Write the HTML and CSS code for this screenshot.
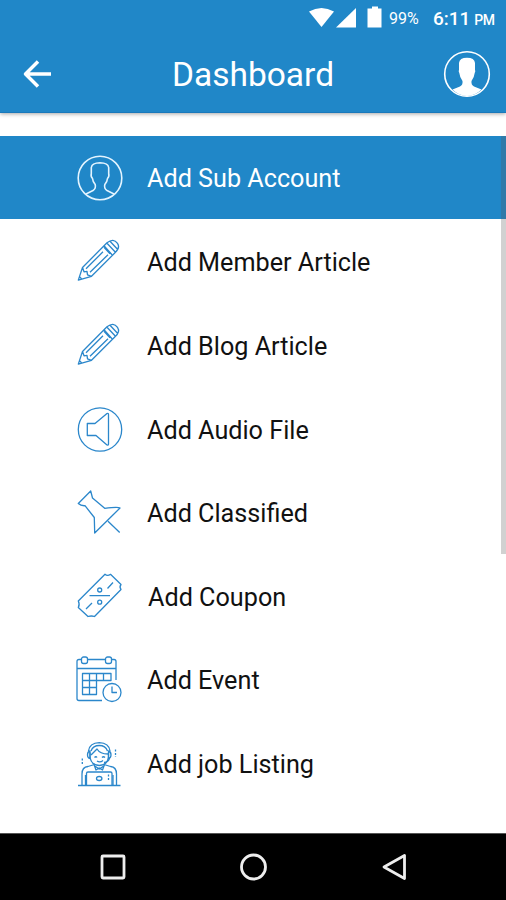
FILE: index.html
```html
<!DOCTYPE html>
<html lang="en">
<head>
    <meta charset="UTF-8">
    <meta name="viewport" content="width=device-width, initial-scale=1.0">
    <title>Dashboard</title>
    <link rel="stylesheet" href="styles.css">
</head>
<body>
    <div class="screen">
        <header class="header">
            <div class="status-bar">
                <svg class="status-icons" viewBox="0 0 74 24">
                    <path d="M0 5.500Q12.500-1.500 25 5.500L12.500 21z"/>
                    <path d="M47 2v19.500H27z"/>
                    <path d="M63 0.500h6v2h3.500v19H58.500V2.500H63z"/>
                </svg>
                <span class="battery">99%</span>
                <span class="time">6:11 <small>PM</small></span>
            </div>
            <div class="title-bar">
                <button class="back-btn" aria-label="Back">
                    <svg width="30" height="30" viewBox="0 0 30 30">
                        <path d="M29 15H4M16 2.500L3.500 15L16 27.500"/>
                    </svg>
                </button>
                <h1>Dashboard</h1>
                <button class="profile-btn" aria-label="Profile">
                    <svg width="48" height="48" viewBox="0 0 48 48">
                        <circle cx="24" cy="24" r="22.300"/>
                        <path d="M9.500 39.500L17 36.500Q20 35 19.500 31Q16.800 27.500 16.300 23Q15.300 21.500 16 19.500V13Q16.500 7.800 24 7.700Q31.500 7.800 32 13V19.500Q32.700 21.500 31.700 23Q31.200 27.500 28.500 31Q28 35 31 36.500L38.500 39.500Q32 46 24 46Q16 46 9.500 39.500z"/>
                    </svg>
                </button>
            </div>
        </header>

        <main class="content">
            <ul class="menu">
                <li class="menu-item active">
                    <svg class="icon" viewBox="0 0 48 48">
                        <circle cx="24" cy="25" r="21.800"/>
                        <path d="M10 41L17 37.500Q20.200 35.500 19.200 31.500Q16.700 28.500 16.500 25.500Q14.500 23.500 15.300 20.500V14.500Q16 10 24 9.800Q32 10 32.700 14.500V20.500Q33.500 23.500 31.500 25.500Q31.300 28.500 28.800 31.500Q27.800 35.500 31 37.500L38 41"/>
                    </svg>
                    <span>Add Sub Account</span>
                </li>
                <li class="menu-item">
                    <svg class="icon" viewBox="0 -0.800 48 48">
                        <path d="M2.300 42.300L6.500 29.700L31 5Q37.500-.2 41.500 5.500Q44.500 10 39 15L15.500 38.500zM6.500 29.700L8 34L11 33.500L11.500 37L15.500 38.500M28 8L36 17M31 5.500L39 14M34 3.500L41.500 11.500M10 31L27 14M14 34.500L32 17M28 9.500L34 16M3.500 39L5.500 41"/>
                    </svg>
                    <span>Add Member Article</span>
                </li>
                <li class="menu-item">
                    <svg class="icon" viewBox="0 -0.800 48 48">
                        <path d="M2.300 42.300L6.500 29.700L31 5Q37.500-.2 41.500 5.500Q44.500 10 39 15L15.500 38.500zM6.500 29.700L8 34L11 33.500L11.500 37L15.500 38.500M28 8L36 17M31 5.500L39 14M34 3.500L41.500 11.500M10 31L27 14M14 34.500L32 17M28 9.500L34 16M3.500 39L5.500 41"/>
                    </svg>
                    <span>Add Blog Article</span>
                </li>
                <li class="menu-item">
                    <svg class="icon" viewBox="0 0 48 48">
                        <circle cx="24" cy="24.500" r="21.700"/>
                        <path d="M11.300 18.500H19L31 8.500Q32.500 8 32.500 9.500V39Q32.500 40.500 31 40L20 30.500H11.300z"/>
                    </svg>
                    <span>Add Audio File</span>
                </li>
                <li class="menu-item">
                    <svg class="icon" viewBox="0 0 48 48">
                        <path d="M14.700 3L2.300 15.500Q5 18 9 17.700L18.300 29.500L18.700 45L44 20Q42.500 18.500 28.700 20.300L16.500 10zM32 33.200L43.700 44.500"/>
                    </svg>
                    <span>Add Classified</span>
                </li>
                <li class="menu-item coupon">
                    <svg class="icon" viewBox="0 0 48 48">
                        <path d="M29 2.300Q31.500 4.500 34.500 2.300L45 12.500Q43 15 45 17.500L18.500 44.500Q15.500 43.500 12 44.500L2.300 35.500Q4 32.500 2.300 29zM13.500 23.700H34M10 37L16 31M31.500 16.500L37 10.500"/>
                        <circle cx="23.700" cy="18" r="2"/>
                        <circle cx="23.700" cy="30.200" r="2"/>
                    </svg>
                    <span>Add Coupon</span>
                </li>
                <li class="menu-item">
                    <svg class="icon" viewBox="0 0 48 48">
                        <path d="M5.500 4.500H3Q1 4.500 1 6.500V43.500Q1 45.500 3 45.500H26M11.500 4.500H29.500M35.500 4.500H38Q40 4.500 40 6.500V25M1 13.500H40"/>
                        <rect x="5.500" y="2" width="6" height="6.500" rx="2"/>
                        <rect x="29.500" y="2" width="6" height="6.500" rx="2"/>
                        <path d="M6.500 18.500H35V25.500H6.500zM6.500 25.500V39.500H20.500V18.500M13.500 18.500V39.500M6.500 32.500H20.500M27.500 18.500V25.500"/>
                        <circle cx="36" cy="37.500" r="9"/>
                        <path d="M36 31.500V37.500H41"/>
                    </svg>
                    <span>Add Event</span>
                </li>
                <li class="menu-item">
                    <svg class="icon" viewBox="0 0 48 48">
                        <path d="M2 46.500H44.500M6 46.500V35Q6 28 12 27.500L18.500 25.500M40.500 46.500V35Q40.500 28 34.500 27.500L28 25.500M9.500 46.500V36M37 46.500V36"/>
                        <path d="M10.500 46V34.500Q10.500 33 12 33H34.500Q36 33 36 34.500V46M18 25.500L20 31L23.300 29L26.500 31L28.500 25.500M18 26.500L23.300 30L28.500 26.500"/>
                        <ellipse cx="23.200" cy="39.500" rx="2.700" ry="2"/>
                        <path d="M14 13.500V18Q15 26 23.300 26.500Q31.500 26 32.500 18V13.500M12.500 12Q13.500 4 23.300 3.700Q33 4 34 12M15 12Q17 6.500 23.300 6.500Q29.500 6.500 31.500 12M15 16L21 10Q24 15 32 15M18.500 18.500Q20 17 21 18.500M26 18.500Q27.500 17 29 18.500M21 22Q24 24 27 21.500"/>
                        <path d="M14 12Q11.500 12.500 11.500 16Q11.500 19 14 19.500zM32.500 12Q35 12.500 35 16Q35 19 32.500 19.500zM33.500 19.500Q32 23.500 28 23.500"/>
                        <path class="dots" d="M6.300 19.500V26M39.500 10.500V18M32.500 35.500V42"/>
                    </svg>
                    <span>Add job Listing</span>
                </li>
            </ul>
            <div class="scrollbar"></div>
        </main>

        <nav class="nav-bar">
            <svg width="30" height="30" viewBox="0 0 30 30"><rect x="4" y="4" width="22" height="22" rx="1"/></svg>
            <svg width="30" height="30" viewBox="0 0 30 30"><circle cx="14.500" cy="15" r="12"/></svg>
            <svg width="30" height="30" viewBox="0 0 30 30"><path d="M24.500 3.500V26.500L4 15z"/></svg>
        </nav>
    </div>
</body>
</html>
```
FILE: styles.css
```css
* {
    box-sizing: border-box;
}
body {
    margin: 0;
    font-family: Roboto, sans-serif;
    background-color: #fff;
    overflow: hidden;
}
.screen {
    display: flex;
    flex-direction: column;
    height: 900px;
}
svg {
    display: block;
    fill: none;
    stroke-linejoin: round;
}
button {
    padding: 0;
    border: none;
    background: none;
    cursor: pointer;
}
.header {
    height: 113px;
    background-color: #2087c8;
    border-bottom: 1px solid #1a79bb;
    color: #fff;
    box-shadow: 0 1px 4px rgba(0,0,0,0.35);
}
.status-bar {
    display: flex;
    align-items: center;
    height: 36px;
    padding: 0 8px 0 309px;
}
.status-icons {
    width: 74px;
    height: 24px;
    fill: #fff;
}
.battery {
    width: 50px;
    padding-left: 6px;
    font-size: 16px;
}
.time {
    font-size: 19px;
    font-weight: 500;
    white-space: nowrap;
}
.time small {
    font-size: 14px;
    letter-spacing: -0.3px;
    margin-left: -1px;
}
.title-bar {
    display: flex;
    align-items: center;
    height: 76px;
    padding: 0 15px 0 22px;
}
.title-bar svg {
    stroke: #fff;
}
.back-btn {
    width: 150px;
}
.back-btn svg {
    stroke-width: 3.5;
}
.profile-btn {
    margin-left: auto;
}
.profile-btn svg {
    stroke-width: 1.6;
}
.profile-btn path {
    fill: #fff;
    stroke: none;
}
h1 {
    margin: 0;
    font-size: 33.5px;
    font-weight: 400;
}
.content {
    position: relative;
    flex: 1;
    padding-top: 23px;
}
.menu {
    margin: 0;
    padding: 0;
    list-style: none;
}
.menu-item {
    display: flex;
    align-items: center;
    gap: 23px;
    height: 83.6px;
    padding-left: 76px;
    font-size: 25.2px;
    color: #111;
}
.menu-item span {
    padding-top: 3px;
}
.menu-item.active {
    height: 82.6px;
    margin-bottom: 1px;
    background-color: #2087c8;
    color: #fff;
}
.menu-item.coupon {
    gap: 24px;
}
.icon {
    width: 48px;
    height: 48px;
    stroke: #2b87cb;
    stroke-width: 1.3;
}
.active .icon {
    stroke: #e3f4ff;
    stroke-width: 1.6;
}
.dots {
    stroke-dasharray: 2 1.5;
}
.scrollbar {
    position: absolute;
    top: 23px;
    right: 0;
    width: 5px;
    height: 418px;
    background-color: rgba(90,90,90,0.28);
}
.nav-bar {
    display: flex;
    align-items: center;
    justify-content: space-between;
    height: 67px;
    padding: 0 96px 0 98px;
    background-color: #000;
    border-top: 1px solid #555;
}
.nav-bar svg {
    stroke: #eee;
    stroke-width: 2.8;
}
```
